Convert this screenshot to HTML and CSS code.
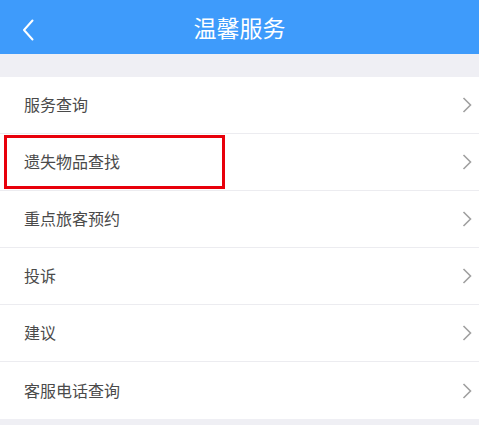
FILE: index.html
```html
<!DOCTYPE html>
<html lang="zh">
<head>
<meta charset="utf-8">
<link rel="stylesheet" href="styles.css">
</head>
<body>
<header class="nav">
  <span class="back"><svg width="12" height="22" viewBox="0 0 12 22"><path d="M10.5 1.5 L2 11 L10.5 20.5" fill="none" stroke="#fff" stroke-width="2" stroke-linecap="round" stroke-linejoin="round"/></svg></span>
  <h1 class="title">温馨服务</h1>
</header>
<div class="gap"></div>
<ul class="list">
  <li class="item"><span class="label">服务查询</span><span class="arrow"><svg width="10" height="16" viewBox="0 0 10 16"><path d="M1.5 1 L8.5 8 L1.5 15" fill="none" stroke="#a0a0a0" stroke-width="1.6"/></svg></span></li>
  <li class="item"><span class="label">遗失物品查找</span><span class="arrow"><svg width="10" height="16" viewBox="0 0 10 16"><path d="M1.5 1 L8.5 8 L1.5 15" fill="none" stroke="#a0a0a0" stroke-width="1.6"/></svg></span><span class="highlight"></span></li>
  <li class="item"><span class="label">重点旅客预约</span><span class="arrow"><svg width="10" height="16" viewBox="0 0 10 16"><path d="M1.5 1 L8.5 8 L1.5 15" fill="none" stroke="#a0a0a0" stroke-width="1.6"/></svg></span></li>
  <li class="item"><span class="label">投诉</span><span class="arrow"><svg width="10" height="16" viewBox="0 0 10 16"><path d="M1.5 1 L8.5 8 L1.5 15" fill="none" stroke="#a0a0a0" stroke-width="1.6"/></svg></span></li>
  <li class="item"><span class="label">建议</span><span class="arrow"><svg width="10" height="16" viewBox="0 0 10 16"><path d="M1.5 1 L8.5 8 L1.5 15" fill="none" stroke="#a0a0a0" stroke-width="1.6"/></svg></span></li>
  <li class="item"><span class="label">客服电话查询</span><span class="arrow"><svg width="10" height="16" viewBox="0 0 10 16"><path d="M1.5 1 L8.5 8 L1.5 15" fill="none" stroke="#a0a0a0" stroke-width="1.6"/></svg></span></li>
</ul>
</body>
</html>
```
FILE: styles.css
```css
html, body {
  margin: 0;
  padding: 0;
  background: #efeff4;
  font-family: "Noto Sans CJK SC", "Noto Sans", sans-serif;
  width: 479px;
  height: 425px;
  overflow: hidden;
}
.nav {
  height: 54px;
  background: #3e9bfb;
  display: flex;
  align-items: center;
  justify-content: center;
  position: relative;
}
.back {
  position: absolute;
  left: 22px;
  top: 19px;
  display: flex;
}
.title {
  margin: 0;
  font-size: 23px;
  font-weight: 400;
  color: #fff;
  line-height: 1;
}
.gap {
  height: 23px;
}
.list {
  list-style: none;
  margin: 0;
  padding: 0;
  background: #fff;
}
.item {
  position: relative;
  height: 56px;
  border-bottom: 1px solid #ececf0;
  display: flex;
  align-items: center;
  justify-content: space-between;
  padding: 0 7px 0 24px;
}
.item:last-child {
  border-bottom: none;
  height: 57px;
}
.label {
  font-size: 16px;
  color: #4a4a4a;
  position: relative;
  top: -1px;
}
.arrow {
  display: flex;
  width: 10px;
}
.highlight {
  position: absolute;
  left: 4px;
  top: 1px;
  width: 215px;
  height: 48px;
  border: 3px solid #e8000b;
}
```
